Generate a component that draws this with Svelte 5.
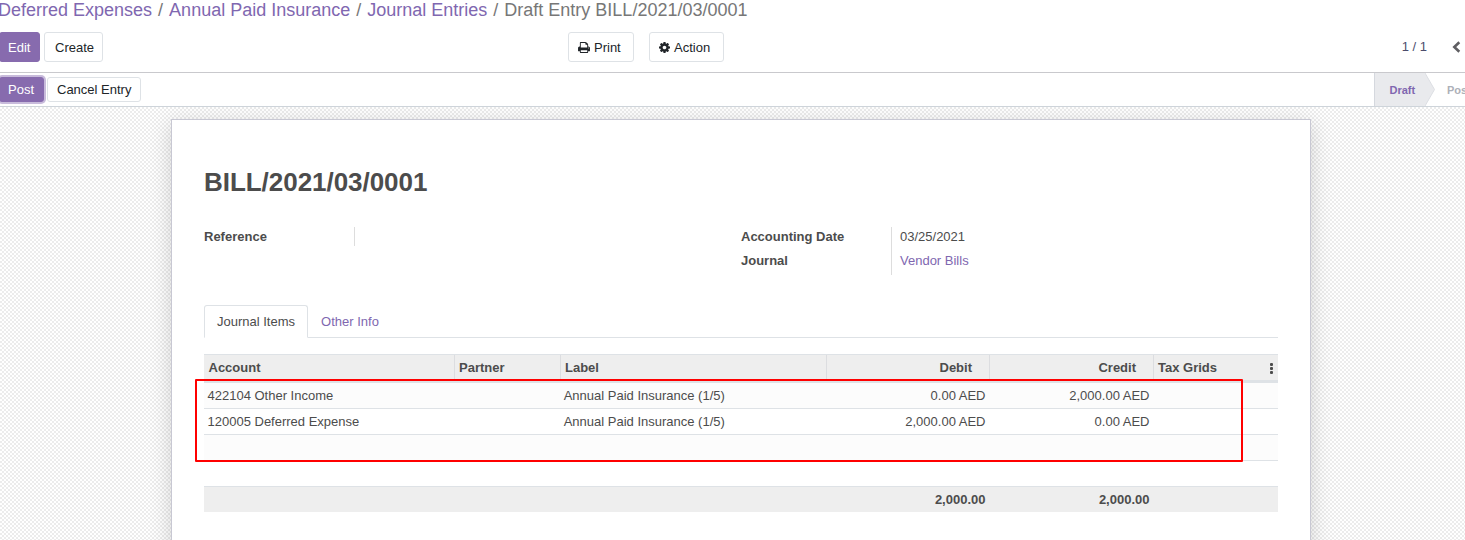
<script>
  const crumbs = ['Deferred Expenses', 'Annual Paid Insurance', 'Journal Entries'];
  const rows = [
    { account: '422104 Other Income', label: 'Annual Paid Insurance (1/5)', debit: '0.00 AED', credit: '2,000.00 AED' },
    { account: '120005 Deferred Expense', label: 'Annual Paid Insurance (1/5)', debit: '2,000.00 AED', credit: '0.00 AED' },
    { account: '', label: '', debit: '', credit: '' }
  ];
</script>

<div class="page">
  <header>
    <nav class="crumbs">
      {#each crumbs as c}<a>{c}</a><span class="sep">/</span>{/each}<span>Draft Entry BILL/2021/03/0001</span>
    </nav>
    <div class="toolbar">
      <div class="left">
        <button class="btn primary edit">Edit</button>
        <button class="btn create">Create</button>
      </div>
      <div class="mid">
        <button class="btn print">
          <svg width="12" height="11" viewBox="0 128 1664 1536"><path d="M384 1536h896v-256h-896v256zM384 896h896v-384h-160q-40 0-68-28t-28-68v-160h-640v640zM1536 960q0-26-19-45t-45-19-45 19-19 45 19 45 45 19 45-19 19-45zM1664 960v416q0 13-9.500 22.500t-22.500 9.500h-224v160q0 40-28 68t-68 28h-960q-40 0-68-28t-28-68v-160h-224q-13 0-22.500-9.500t-9.500-22.500v-416q0-79 56.500-135.500t135.500-56.500h64v-544q0-40 28-68t68-28h672q40 0 88 20t76 48l152 152q28 28 48 76t20 88v256h64q79 0 135.500 56.500t56.500 135.500z" /></svg>
          Print
        </button>
        <button class="btn action">
          <svg width="11" height="11" viewBox="0 -1408 1536 1536"><path transform="scale(1,-1)" d="M1024 640q0 106-75 181t-181 75-181-75-75-181 75-181 181-75 181 75 75 181zM1536 749v-222q0-12-8-23t-20-13l-185-28q-19-54-39-91 35-50 107-138 10-12 10-25t-9-23q-27-37-99-108t-94-71q-12 0-26 9l-138 108q-44-23-91-38-16-136-29-186-7-28-36-28h-222q-14 0-24.500 8.500t-11.500 21.500l-28 184q-49 16-90 37l-141-107q-10-9-25-9-14 0-25 11-126 114-165 168-7 10-7 23 0 12 8 23 15 21 51 66.500t54 70.500q-27 50-41 99l-183 27q-13 2-21 12.500t-8 23.500v222q0 12 8 23t19 13l186 28q14 46 39 92-40 57-107 138-10 12-10 24 0 10 9 23 26 36 98.500 107.500t94.500 71.500q13 0 26-10l138-107q44 23 91 38 16 136 29 186 7 28 36 28h222q14 0 24.500-8.500t11.500-21.500l28-184q49-16 90-37l142 107q9 9 24 9 13 0 25-10 129-119 165-170 7-8 7-22 0-12-8-23-15-21-51-66.500t-54-70.500q26-50 41-98l183-28q13-2 21-12.500t8-23.500z" /></svg>
          Action
        </button>
      </div>
      <div class="pager">
        <span>1 / 1</span>
        <svg width="9" height="12" viewBox="0 0 9 12"><path d="M7.300 1.200 2.300 6l5 4.800" fill="none" stroke="#5f5e62" stroke-width="2.600" /></svg>
      </div>
    </div>
  </header>

  <div class="statusbar">
    <div class="left">
      <button class="btn primary post">Post</button>
      <button class="btn cancel">Cancel Entry</button>
    </div>
    <div class="stages">
      <span class="draft">Draft</span>
      <svg width="11" height="33" viewBox="0 0 11 33"><path d="M0 0 9.500 16.500 0 33z" fill="#e9eaed" /><path d="M0 0 9.500 16.500 0 33" fill="none" stroke="#dcdee3" /></svg>
      <span class="posted">Posted</span>
    </div>
  </div>

  <main>
    <section class="sheet">
      <h1>BILL/2021/03/0001</h1>
      <div class="groups">
        <dl class="one">
          <dt>Reference</dt><dd></dd>
        </dl>
        <dl>
          <dt>Accounting Date</dt><dd>03/25/2021</dd>
          <dt>Journal</dt><dd><a>Vendor Bills</a></dd>
        </dl>
      </div>

      <div class="tabs">
        <span class="tab active">Journal Items</span>
        <span class="tab">Other Info</span>
      </div>

      <div class="table">
        <div class="row head">
          <span>Account</span><span>Partner</span><span>Label</span><span class="num">Debit</span><span class="num">Credit</span><span>Tax Grids</span>
          <span class="dots"><i></i><i></i><i></i></span>
        </div>
        {#each rows as r}
          <div class="row">
            <span>{r.account}</span><span></span><span>{r.label}</span><span class="num">{r.debit}</span><span class="num">{r.credit}</span><span></span><span></span>
          </div>
        {/each}
        <div class="row total">
          <span></span><span></span><span></span><span class="num">2,000.00</span><span class="num">2,000.00</span><span></span><span></span>
        </div>
        <div class="highlight"></div>
      </div>
    </section>
  </main>
</div>

<style>
  :global(body) { margin: 0; overflow: hidden; }
  * { box-sizing: border-box; }
  .page {
    width: 1465px; height: 540px; overflow: hidden;
    display: flex; flex-direction: column;
    font: 13px/20px "Liberation Sans", Arial, sans-serif;
    color: #4c4c4c; background: #fff;
  }
  a { color: #8067b0; }
  header { height: 73px; flex: none; border-bottom: 1px solid #c9c9cd; }
  .crumbs { height: 32px; font-size: 18px; line-height: 20px; color: #777; white-space: nowrap; margin-left: -2px; }
  .sep { padding: 0 6px; }
  .toolbar { display: grid; grid-template-columns: 568px 1fr auto; height: 30px; }
  .left, .mid { display: flex; }
  .left { gap: 4px; }
  .mid { gap: 15px; }
  .btn {
    height: 30px; padding: 0 9px; border: 1px solid #dee2e6; border-radius: 3px;
    background: #fff; color: #212529; font: inherit; white-space: nowrap;
    display: flex; align-items: center; gap: 4px;
  }
  .toolbar .btn { padding-top: 1px; }
  .btn svg { fill: #212529; flex: none; margin-top: -1px; }
  .primary { background: #876bae; border-color: #876bae; color: #fff; }
  .edit { width: 41px; margin-left: -1px; padding: 0 8px; }
  .create { width: 59px; padding-left: 10px; padding-right: 8px; }
  .print { width: 66px; }
  .action { width: 75px; }
  .pager { display: flex; align-items: center; gap: 25px; padding-right: 4px; color: #4c4c6c; }
  .statusbar {
    height: 34px; flex: none; display: flex; justify-content: space-between;
    border-bottom: 1px solid #ced4da;
  }
  .statusbar .left { padding-top: 4px; gap: 3px; }
  .statusbar .btn { height: 25px; }
  .statusbar .post { width: 45px; margin-left: -1px; padding: 0 8px; box-shadow: 0 0 0 2px #c8bbdb; }
  .stages { display: flex; width: 91px; overflow: hidden; font-size: 11px; font-weight: bold; line-height: 34px; }
  .stages svg { flex: none; }
  .draft { width: 51px; flex: none; padding-left: 14.500px; background: #e9eaed; border-left: 1px solid #d5d8de; color: #8067b0; }
  .posted { padding-left: 11px; color: #adb0b8; }
  main {
    flex: 1; padding: 12px 0 0 171px; overflow: hidden;
    background: conic-gradient(#ececec 25%, #fff 0 50%, #ececec 0 75%, #fff 0) 0 0 / 4px 4px;
  }
  .sheet {
    width: 1140px; height: 500px; padding: 46px 32px 0;
    border: 1px solid #c8c8d3; background: #fff;
    box-shadow: 0 5px 20px rgba(0, 0, 0, .17);
  }
  h1 { margin: 0; font-size: 26px; line-height: 32px; font-weight: bold; letter-spacing: -.04px; }
  .groups { display: grid; grid-template-columns: 537px 1fr; margin-top: 29px; height: 78px; }
  dl { margin: 0; display: grid; grid-template-columns: 150px 1fr; grid-auto-rows: 24px; align-content: start; }
  dl.one { grid-auto-rows: 19px; }
  dt { font-weight: bold; }
  dd { margin: 0; padding-left: 8px; border-left: 1px solid #ddd; }
  .tabs { display: flex; height: 33px; border-bottom: 1px solid #dee2e6; }
  .tab { height: 33px; padding: 6px 12px; border: 1px solid transparent; color: #8067b0; }
  .active { color: #4c4c4c; background: #fff; border-color: #dee2e6; border-bottom-color: #fff; border-radius: 3px 3px 0 0; }
  .table { position: relative; margin-top: 16px; }
  .row {
    display: grid; grid-template-columns: 251px 106px 266px 163px 164px 99px 25px;
    height: 26px; border-bottom: 1px solid #dee2e6; line-height: 25px;
  }
  .row span { padding: 0 4.500px 0 3.500px; white-space: nowrap; }
  .row span:nth-child(3) { padding-left: 2.700px; }
  .row:nth-child(even) { background: #fcfcfc; }
  .row .num { text-align: right; }
  .row.head { height: 29px; background: #eee; border-top: 1px solid #dee2e6; border-bottom: 3px solid #dee2e6; font-weight: bold; }
  .row.head span { padding-left: 4px; border-right: 1px solid #dcdde0; }
  .row.head span:first-child { padding-left: 4.500px; }
  .row.head .num { padding-right: 17px; }
  .row.head span:nth-child(n + 6) { border-right: 0; }
  .row.head .dots { display: flex; flex-direction: column; gap: 1px; padding: 8px 0 0 17px; }
  .dots i { width: 3px; height: 3px; background: #4c4c4c; border-radius: 1px; }
  .row.total { margin-top: 25px; background: #eee; border-top: 1px solid #dee2e6; border-bottom: 0; font-weight: bold; }
  .highlight { position: absolute; left: -9px; top: 25px; width: 1048px; height: 83px; border: 2px solid #f00; border-radius: 1px; }
</style>
